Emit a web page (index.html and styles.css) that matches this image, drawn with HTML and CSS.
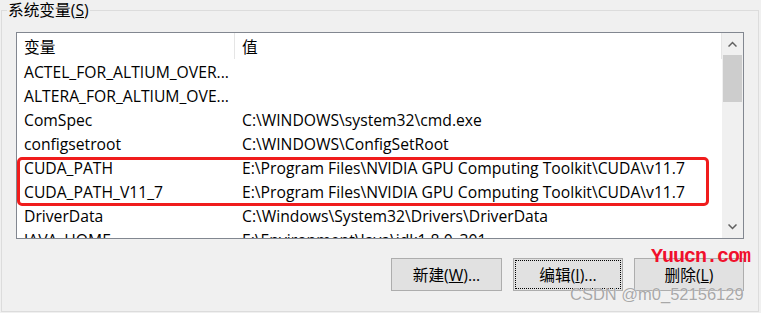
FILE: index.html
```html
<!DOCTYPE html>
<html lang="zh-CN">
<head>
    <meta charset="UTF-8">
    <title>系统变量</title>
    <link rel="stylesheet" href="styles.css">
</head>
<body>
    <fieldset class="group">
        <legend>系统变量(<u>S</u>)</legend>

        <div class="listview">
            <div class="lv-body">
                <div class="lv-header">
                    <div class="col-name">变量</div>
                    <div class="col-value">值</div>
                </div>
                <div class="row"><div class="name">ACTEL_FOR_ALTIUM_OVER...</div><div class="value"></div></div>
                <div class="row"><div class="name">ALTERA_FOR_ALTIUM_OVE...</div><div class="value"></div></div>
                <div class="row"><div class="name">ComSpec</div><div class="value">C:\WINDOWS\system32\cmd.exe</div></div>
                <div class="row"><div class="name">configsetroot</div><div class="value">C:\WINDOWS\ConfigSetRoot</div></div>
                <div class="mark">
                    <div class="row"><div class="name">CUDA_PATH</div><div class="value">E:\Program Files\NVIDIA GPU Computing Toolkit\CUDA\v11.7</div></div>
                    <div class="row"><div class="name">CUDA_PATH_V11_7</div><div class="value">E:\Program Files\NVIDIA GPU Computing Toolkit\CUDA\v11.7</div></div>
                </div>
                <div class="row"><div class="name">DriverData</div><div class="value">C:\Windows\System32\Drivers\DriverData</div></div>
                <div class="row"><div class="name">JAVA_HOME</div><div class="value">E:\Environment\Java\jdk1.8.0_301</div></div>
            </div>
            <div class="scrollbar">
                <div class="sb-btn">
                    <svg width="9" height="6" viewBox="0 0 9 6"><polyline points="0.5,5.5 4.5,1.5 8.5,5.5" fill="none" stroke="#606060" stroke-width="1.5"/></svg>
                </div>
                <div class="sb-thumb"></div>
                <div class="sb-track"></div>
                <div class="sb-btn">
                    <svg width="9" height="6" viewBox="0 0 9 6"><polyline points="0.5,0.5 4.5,4.5 8.5,0.5" fill="none" stroke="#606060" stroke-width="1.5"/></svg>
                </div>
            </div>
        </div>

        <div class="actions">
            <button class="btn btn-wide">新建(<u>W</u>)...</button>
            <button class="btn btn-focus">编辑(<u>I</u>)...</button>
            <button class="btn">删除(<u>L</u>)</button>
        </div>
    </fieldset>

    <span class="wm-site">Yuucn.com</span>
    <span class="wm-csdn">CSDN @m0_52156129</span>
</body>
</html>
```

FILE: styles.css
```css
body {
    margin: 0;
    width: 761px;
    height: 313px;
    overflow: hidden;
    background-color: #f0f0f0;
    font-family: "Open Sans", "Noto Sans CJK SC", sans-serif;
    font-size: 15.7px;
    color: #000;
}

.group {
    box-sizing: border-box;
    width: 758px;
    height: 312px;
    margin: 0 0 0 1px;
    padding: 0 14px 0 14px;
    border: 1px solid #dcdcdc;
}

.group legend {
    margin-left: -9px;
    padding: 0 1px;
    line-height: 20px;
}

.listview {
    box-sizing: border-box;
    display: flex;
    width: 728px;
    height: 207px;
    margin-top: 12px;
    border: 1px solid #828790;
    background-color: #fff;
}

.lv-body {
    width: 705px;
    overflow: hidden;
}

.lv-header {
    display: flex;
    height: 27px;
}

.col-name,
.col-value {
    box-sizing: border-box;
    height: 26px;
    line-height: 29px;
    padding-left: 7px;
    border-right: 1px solid #e5e5e5;
}

.col-name {
    width: 218px;
}

.col-value {
    width: 487px;
}

.row {
    display: flex;
    height: 24px;
    line-height: 24px;
    white-space: nowrap;
}

.row .name {
    box-sizing: border-box;
    width: 218px;
    padding-left: 7px;
}

.row .value {
    padding-left: 7px;
}

.mark {
    position: relative;
}

/* the red frame drawn over the two CUDA rows */
.mark::after {
    content: "";
    position: absolute;
    left: 0;
    top: 1px;
    box-sizing: border-box;
    width: 692px;
    height: 49px;
    border: 3px solid #f01c1c;
    border-radius: 5px;
}

.scrollbar {
    display: flex;
    flex-direction: column;
    align-items: center;
    width: 21px;
    background-color: #f0f0f0;
}

.sb-btn {
    display: flex;
    align-items: center;
    justify-content: center;
    width: 21px;
    height: 22px;
}

.sb-thumb {
    width: 19px;
    height: 47px;
    background-color: #cdcdcd;
}

.sb-track {
    flex: 1;
}

.actions {
    display: flex;
    justify-content: flex-end;
    gap: 11px;
    margin-top: 19px;
}

.btn {
    box-sizing: border-box;
    width: 110px;
    height: 33px;
    padding: 0;
    border: 1px solid #adadad;
    background-color: #e1e1e1;
    font-family: inherit;
    font-size: 15.7px;
    color: #000;
}

.btn-wide {
    width: 111px;
}

.btn-focus {
    outline: 1px dotted #000;
    outline-offset: -3px;
}

.wm-site {
    position: absolute;
    left: 651px;
    top: 247px;
    font-family: "Liberation Mono", monospace;
    font-weight: bold;
    font-size: 20px;
    line-height: 20px;
    letter-spacing: -1px;
    color: #f0102c;
}

.wm-csdn {
    position: absolute;
    left: 570px;
    top: 285px;
    font-family: "Liberation Sans", sans-serif;
    font-size: 16.5px;
    line-height: 19px;
    color: #a8a8a8;
    text-shadow: 0 0 1px #fff;
}
```
